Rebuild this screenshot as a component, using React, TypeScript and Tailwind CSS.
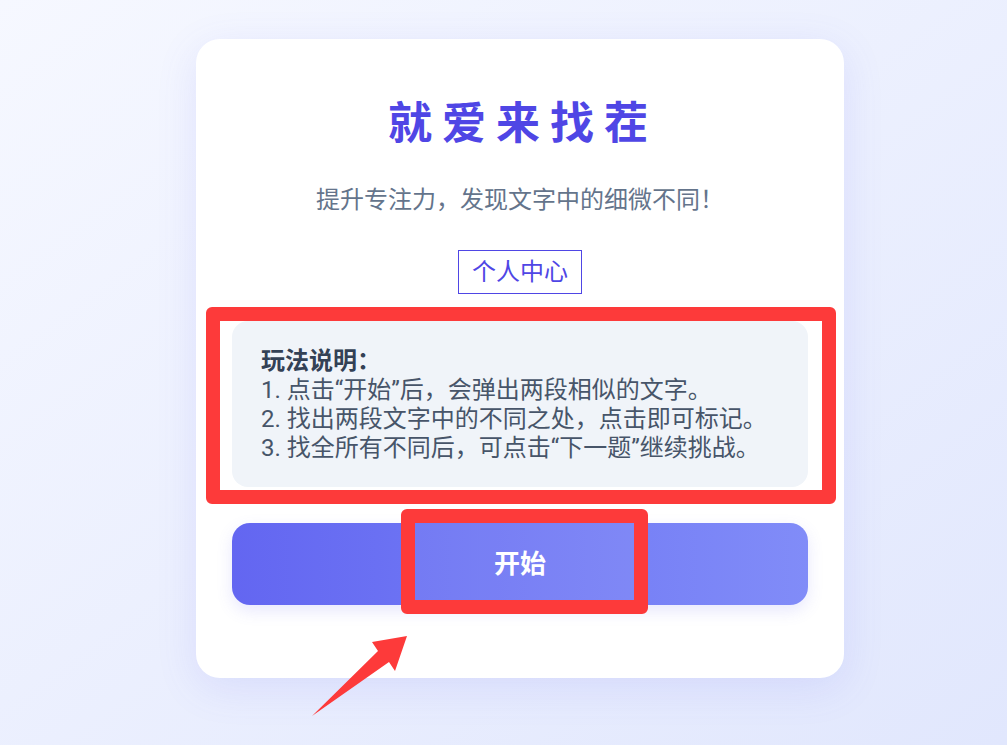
export default function App() {
  return (
    <div
      lang="zh-CN"
      className="relative min-h-screen bg-linear-to-br from-[#f6f8ff] to-[#e1e7fd] pl-[33px] pt-[39px] font-[Roboto,'Noto_Sans_CJK_SC',sans-serif]"
    >
      <div className="mx-auto w-[648px] h-[639px] rounded-[24px] bg-white shadow-[0_10px_40px_rgba(99,102,241,0.13)] px-9 pt-[59px] flex flex-col items-center">
        <h1 className="text-[44px] leading-[53px] font-bold tracking-[10px] text-[#4f46e5] pl-[6px]">
          就爱来找茬
        </h1>
        <p className="mt-[31px] text-[24px] leading-[36px] text-[#64748b]">
          提升专注力，发现文字中的细微不同！
        </p>
        <button className="mt-[32px] border border-[#4f46e5] px-[13px] py-[3px] text-[24px] leading-[36px] text-[#4f46e5]">
          个人中心
        </button>

        <div className="relative mt-[27px] w-full">
          <div className="rounded-[16px] bg-[#f0f4f9] pl-[29px] pr-6 pt-[26px] pb-[24px] text-[24px] leading-[29px] text-[#475569]">
            <div className="font-bold text-[#334155]">玩法说明：</div>
            <div>1. 点击“开始”后，会弹出两段相似的文字。</div>
            <div>2. 找出两段文字中的不同之处，点击即可标记。</div>
            <div>3. 找全所有不同后，可点击“下一题”继续挑战。</div>
          </div>
          {/* annotation frame */}
          <div className="absolute -left-[26px] -right-[28px] -top-[14px] -bottom-[17px] rounded-[6px] border-[14px] border-[#fd3a3a]" />
        </div>

        <div className="relative mt-[36px] w-full">
          <button className="w-full h-[82px] rounded-[18px] bg-linear-to-r from-[#6366f1] to-[#818cf8] text-[26px] font-bold text-white shadow-[0_6px_16px_rgba(99,102,241,0.15)]">
            开始
          </button>
          {/* annotation frame */}
          <div className="absolute left-[169px] top-[-14px] w-[247px] h-[105px] rounded-[6px] border-[14px] border-[#fd3a3a] bg-white/[0.06]" />
        </div>
      </div>

      <svg className="absolute left-0 top-0 pointer-events-none" width="1007" height="745">
        <polygon
          points="312,716 378,651 372,642 407,636 395,671 389,662"
          fill="#fd3a3a"
        />
      </svg>
    </div>
  );
}
